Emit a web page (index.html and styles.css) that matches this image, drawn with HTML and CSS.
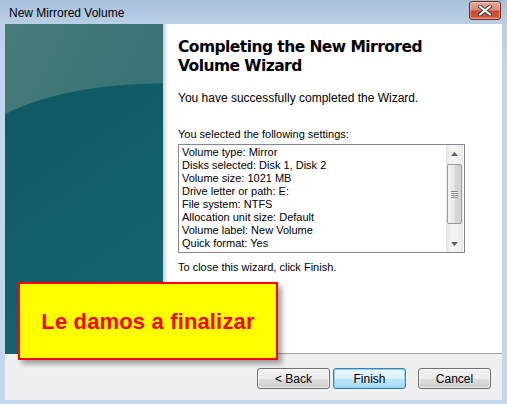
FILE: index.html
```html
<!DOCTYPE html>
<html>
<head>
<meta charset="utf-8">
<link rel="stylesheet" href="styles.css">
</head>
<body>
<div class="window">
  <div class="titlebar">
    <span class="title">New Mirrored Volume</span>
    <div class="close">
      <svg width="14" height="11" viewBox="0 0 14 11">
        <path d="M2 1.5 L12 9.5 M12 1.5 L2 9.5" stroke="#3a3a3a" stroke-width="4" stroke-linecap="round"/>
        <path d="M2 1.5 L12 9.5 M12 1.5 L2 9.5" stroke="#ffffff" stroke-width="2.2" stroke-linecap="round"/>
      </svg>
    </div>
  </div>
  <div class="client">
    <div class="main">
      <div class="banner">
        <svg class="banner-art" width="158" height="330" viewBox="0 0 158 330" preserveAspectRatio="none">
          <defs>
            <linearGradient id="up" x1="0" y1="0" x2="1" y2="1">
              <stop offset="0" stop-color="#467c7a"/>
              <stop offset="1" stop-color="#2e6c6f"/>
            </linearGradient>
            <linearGradient id="low" x1="0" y1="0" x2="0.4" y2="1">
              <stop offset="0" stop-color="#0f5862"/>
              <stop offset="1" stop-color="#13656f"/>
            </linearGradient>
          </defs>
          <rect x="0" y="0" width="158" height="330" fill="url(#up)"/>
          <path d="M0 90 C 40 70, 90 60, 158 59 L158 330 L0 330 Z" fill="url(#low)"/>
          <path d="M0 90 C 40 70, 90 60, 158 59" stroke="#3a7777" stroke-width="1" fill="none" opacity="0.6"/>
        </svg>
      </div>
      <div class="shade"></div>
      <div class="content">
        <h1 class="heading">Completing the New Mirrored Volume Wizard</h1>
        <p class="text done">You have successfully completed the Wizard.</p>
        <p class="text small sel">You selected the following settings:</p>
        <div class="listbox">
          <div class="lines">
            <div>Volume type: Mirror</div>
            <div>Disks selected: Disk 1, Disk 2</div>
            <div>Volume size: 1021 MB</div>
            <div>Drive letter or path: E:</div>
            <div>File system: NTFS</div>
            <div>Allocation unit size: Default</div>
            <div>Volume label: New Volume</div>
            <div>Quick format: Yes</div>
          </div>
          <div class="scrollbar">
            <div class="arrow">
              <svg width="7" height="4" viewBox="0 0 7 4"><path d="M0 4 L3.5 0 L7 4 Z" fill="#606060"/></svg>
            </div>
            <div class="track">
              <div class="thumb">
                <div class="grip"></div>
              </div>
            </div>
            <div class="arrow">
              <svg width="7" height="4" viewBox="0 0 7 4"><path d="M0 0 L3.5 4 L7 0 Z" fill="#606060"/></svg>
            </div>
          </div>
        </div>
        <p class="text small close-hint">To close this wizard, click Finish.</p>
      </div>
    </div>
    <div class="footer">
      <button class="btn">&lt; Back</button>
      <button class="btn default">Finish</button>
      <button class="btn cancel">Cancel</button>
    </div>
    <div class="callout">Le damos a finalizar</div>
  </div>
</div>
</body>
</html>
```
FILE: styles.css
```css
* { box-sizing: border-box; }
html, body {
  margin: 0;
  padding: 0;
  background: #c2d6ec;
}
body {
  font-family: "Liberation Sans", Arial, sans-serif;
  font-size: 12px;
  color: #000;
}
.window {
  width: 507px;
  height: 404px;
  background: linear-gradient(180deg, #a7c0da 0px, #b9cfe6 24px, #c1d6ec 60px, #c3d7ed 404px);
  display: flex;
  flex-direction: column;
  overflow: hidden;
}
.titlebar {
  height: 24px;
  display: flex;
  align-items: center;
  justify-content: space-between;
  padding: 0 6px 0 9px;
  position: relative;
}
.title {
  font-size: 12px;
  color: #000;
  padding-top: 1px;
}
.close {
  width: 32px;
  height: 19px;
  margin-top: -3px;
  border: 1px solid #6e2a22;
  border-radius: 3px;
  background: linear-gradient(180deg, #e8a899 0%, #d98a78 45%, #c64a33 55%, #d2553c 85%, #e07a5f 100%);
  box-shadow: inset 0 0 0 1px rgba(255, 255, 255, 0.35);
  display: flex;
  align-items: center;
  justify-content: center;
}
.client {
  position: relative;
  margin: 0 5px 4px 5px;
  height: 376px;
  background: #f0f0f0;
  display: flex;
  flex-direction: column;
}
.main {
  height: 330px;
  display: flex;
  background: #fff;
  border-bottom: 1px solid #a0a0a0;
  flex: none;
}
.banner {
  width: 158px;
  height: 330px;
  flex: none;
  position: relative;
}
.banner-art { display: block; }
.shade {
  width: 5px;
  flex: none;
  background: linear-gradient(90deg, #c9cfd1, #eef0f0 70%, #fff);
}
.content {
  flex: 1;
  padding: 14px 0 0 10px;
}
.heading {
  margin: 0;
  font-family: "DejaVu Sans", Verdana, sans-serif;
  font-weight: bold;
  font-size: 15.5px;
  line-height: 19px;
  width: 270px;
  letter-spacing: -0.55px;
}
.text {
  margin: 0;
  line-height: 14px;
}
.text.small { font-size: 11px; }
.done { margin-top: 15px; }
.sel { margin-top: 22px; }
.listbox {
  margin-top: 3px;
  width: 287px;
  height: 109px;
  border: 1px solid #828790;
  display: flex;
  background: #fff;
}
.lines {
  flex: 1;
  padding: 1px 0 0 3px;
  font-size: 11px;
  line-height: 13px;
}
.scrollbar {
  width: 17px;
  margin: 0 1px 0 0;
  display: flex;
  flex-direction: column;
  background: linear-gradient(90deg, #e4e4e4, #f3f3f3 30%, #f3f3f3 70%, #e8e8e8);
}
.arrow {
  height: 17px;
  display: flex;
  align-items: center;
  justify-content: center;
}
.track {
  flex: 1;
  padding: 2px 0 11px 0;
  display: flex;
}
.thumb {
  flex: 1;
  margin: 0 1px;
  border: 1px solid #9c9c9c;
  border-radius: 2px;
  background: linear-gradient(90deg, #f2f2f2, #e6e6e6 50%, #d6d6d6 51%, #d2d2d2);
  display: flex;
  align-items: center;
  justify-content: center;
}
.grip {
  width: 7px;
  height: 7px;
  background: repeating-linear-gradient(180deg, #8a8a8a 0 1px, #f4f4f4 1px 2px);
}
.close-hint { margin-top: 7px; }
.footer {
  flex: 1;
  display: flex;
  justify-content: flex-end;
  align-items: flex-start;
  padding: 14px 11px 0 0;
}
.btn {
  width: 73px;
  height: 21px;
  margin-left: 3px;
  font-family: "Liberation Sans", Arial, sans-serif;
  font-size: 12px;
  color: #000;
  border: 1px solid #707070;
  border-radius: 3px;
  background: linear-gradient(180deg, #f2f2f2 0%, #ebebeb 50%, #dddddd 51%, #cfcfcf 100%);
  box-shadow: inset 0 0 0 1px rgba(255, 255, 255, 0.6);
  padding: 0;
}
.btn.default {
  border-color: #3c7fb1;
  background: linear-gradient(180deg, #eaf6fd 0%, #d9f0fc 50%, #bee6fd 51%, #a7d9f5 100%);
  box-shadow: inset 0 0 0 1px #8ed4f5;
}
.btn.cancel { margin-left: 12px; }
.callout {
  position: absolute;
  left: 13px;
  top: 258px;
  width: 260px;
  height: 78px;
  background: #ffff00;
  border: 2px solid #ff0000;
  box-shadow: 4px 4px 5px rgba(0, 0, 0, 0.35);
  color: #ff0000;
  font-family: "Liberation Sans", Arial, sans-serif;
  font-weight: bold;
  font-size: 22px;
  letter-spacing: 0.15px;
  display: flex;
  align-items: center;
  justify-content: center;
  padding-top: 1px;
}
```
